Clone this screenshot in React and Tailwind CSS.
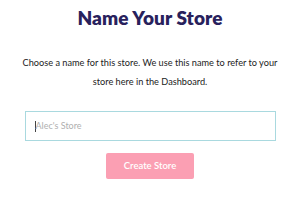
export default function App() {
  return (
    <div className="w-[300px] h-[212px] bg-white flex flex-col items-center" style={{ fontFamily: '"Lato", "Noto Sans", sans-serif' }}>
      <h1 className="mt-[6px] text-[19px] leading-[24px] font-extrabold text-[#28215c] tracking-[0.1px]">Name Your Store</h1>
      <p className="mt-[23px] w-[262px] text-center text-[9.2px] leading-[19px] text-[#222]">
        Choose a name for this store. We use this name to refer to your store here in the Dashboard.
      </p>
      <div className="mt-[20px] w-[251px] h-[30px] border border-[#a9d9df] bg-white flex items-center pl-[9px]">
        <span className="w-px h-[11px] bg-[#444]"></span>
        <span className="text-[9px] text-[#b0b0b0]">Alec's Store</span>
      </div>
      <button className="mt-[12px] w-[88px] h-[26px] bg-[#fb9fb3] text-white text-[9.5px] font-semibold rounded-[2px]">Create Store</button>
    </div>
  );
}
